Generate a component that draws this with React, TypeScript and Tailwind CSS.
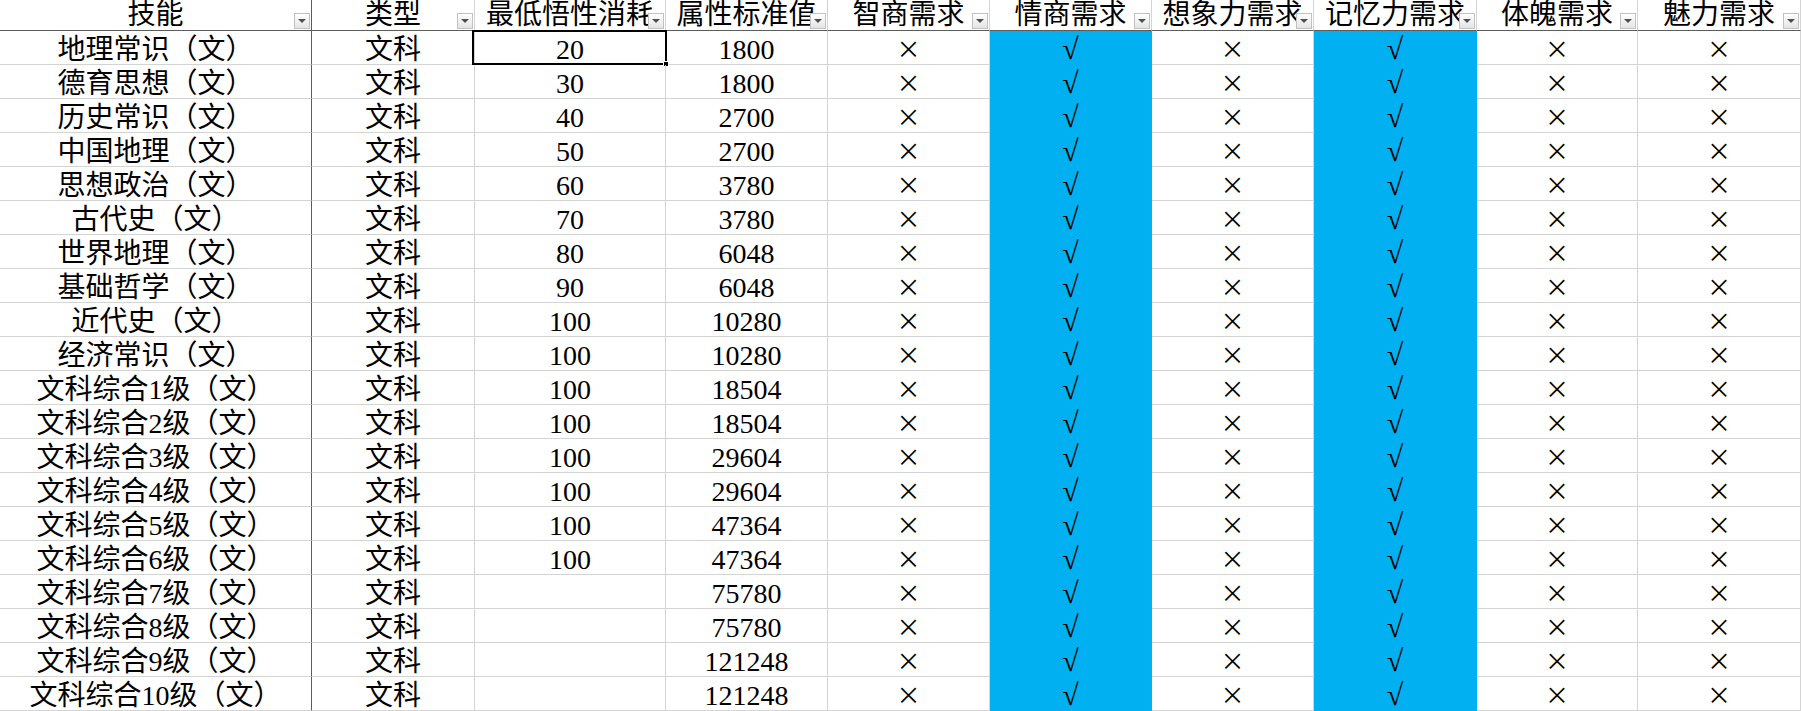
import React from 'react';

const font = "font-['Liberation_Serif','Noto_Sans_CJK_SC',serif]";

const headers = ['技能', '类型', '最低悟性消耗', '属性标准值', '智商需求', '情商需求', '想象力需求', '记忆力需求', '体魄需求', '魅力需求'];

// 技能名, 最低悟性消耗, 属性标准值
const rows: [string, string, string][] = [
  ['地理常识（文）', '20', '1800'],
  ['德育思想（文）', '30', '1800'],
  ['历史常识（文）', '40', '2700'],
  ['中国地理（文）', '50', '2700'],
  ['思想政治（文）', '60', '3780'],
  ['古代史（文）', '70', '3780'],
  ['世界地理（文）', '80', '6048'],
  ['基础哲学（文）', '90', '6048'],
  ['近代史（文）', '100', '10280'],
  ['经济常识（文）', '100', '10280'],
  ['文科综合1级（文）', '100', '18504'],
  ['文科综合2级（文）', '100', '18504'],
  ['文科综合3级（文）', '100', '29604'],
  ['文科综合4级（文）', '100', '29604'],
  ['文科综合5级（文）', '100', '47364'],
  ['文科综合6级（文）', '100', '47364'],
  ['文科综合7级（文）', '', '75780'],
  ['文科综合8级（文）', '', '75780'],
  ['文科综合9级（文）', '', '121248'],
  ['文科综合10级（文）', '', '121248'],
];

// which need columns are ticked (情商, 记忆力)
const needs = [false, true, false, true, false, false];

function FilterButton() {
  return (
    <span className="absolute right-[1px] bottom-[1px] w-[16px] h-[16px] border border-[#c2c2c2] bg-linear-to-b from-white to-[#e4e4e4] flex items-center justify-center">
      <span className="w-0 h-0 border-l-[4px] border-r-[4px] border-t-[4px] border-l-transparent border-r-transparent border-t-[#505050]" />
    </span>
  );
}

export default function App() {
  return (
    <div className={`w-[1801px] h-[711px] overflow-hidden bg-white text-black ${font}`}>
      <div className="grid grid-cols-[312px_163px_191px_162px_162px_162px_162px_163px_161px_163px]">
        {/* header */}
        {headers.map((h, i) => (
          <div
            key={h}
            className={`relative h-[31px] flex items-end justify-center whitespace-nowrap text-[28px] leading-none border-b border-b-[#5c5c5c] border-r ${
              i === 0 ? 'border-r-[#5c5c5c]' : 'border-r-[#d4d4d4]'
            }`}
          >
            <span className="pb-[1px]">{h}</span>
            <FilterButton />
          </div>
        ))}

        {/* body */}
        {rows.map(([name, cost, std], r) => (
          <React.Fragment key={name}>
            <div className="h-[34px] flex items-end justify-center whitespace-nowrap text-[28px] leading-none border-b border-[#d4d4d4] border-r border-r-[#5c5c5c]">
              <span>{name}</span>
            </div>
            <div className="h-[34px] flex items-end justify-center whitespace-nowrap text-[28px] leading-none border-b border-r border-[#d4d4d4]">
              <span>文科</span>
            </div>
            <div className="relative h-[34px] flex items-end justify-center text-[28px] leading-none border-b border-r border-[#d4d4d4]">
              <span>{cost}</span>
              {r === 0 && (
                <div className="absolute -left-[3px] -right-[2px] -top-[1px] -bottom-[1px] border-2 border-black">
                  <span className="absolute -right-[4px] -bottom-[4px] w-[6px] h-[6px] bg-black border border-white" />
                </div>
              )}
            </div>
            <div className="h-[34px] flex items-end justify-center text-[28px] leading-none border-b border-r border-[#d4d4d4]">
              <span>{std}</span>
            </div>
            {needs.map((on, c) =>
              on ? (
                <div key={c} className="h-[34px] flex items-center justify-center bg-[#00b0f0] border-b border-r border-[#00b0f0]">
                  <span className="leading-none font-['Liberation_Serif',serif] font-bold text-[30px] pt-[2px]">√</span>
                </div>
              ) : (
                <div key={c} className="h-[34px] flex items-center justify-center border-b border-r border-[#d4d4d4]">
                  <span className="leading-none font-['Noto_Sans_CJK_SC',sans-serif] text-[24px]">×</span>
                </div>
              )
            )}
          </React.Fragment>
        ))}
      </div>
    </div>
  );
}
